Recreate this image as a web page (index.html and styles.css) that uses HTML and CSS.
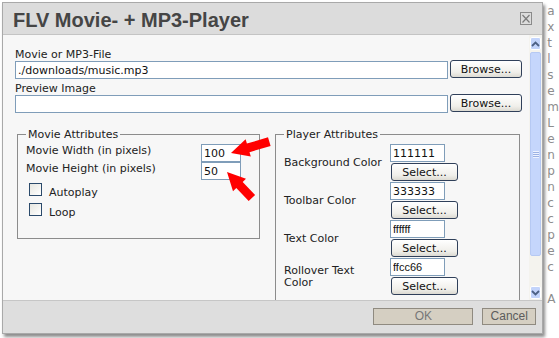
FILE: index.html
```html
<!DOCTYPE html>
<html lang="en">
<head>
    <meta charset="UTF-8">
    <title>FLV Movie- + MP3-Player</title>
    <link rel="stylesheet" href="styles.css">
</head>
<body>
    <div class="screen">
        <div class="dialog">
            <header class="titlebar">
                <h1 class="title">FLV Movie- + MP3-Player</h1>
                <span class="close-btn">
                    <svg width="12" height="13" viewBox="0 0 12 13">
                        <rect x="0.5" y="0.5" width="11" height="12" fill="none" stroke="#8a8a8a"/>
                        <path d="M2.5 3 L9.5 10.5 M9.5 3 L2.5 10.5" stroke="#7a7a7a" stroke-width="1.2"/>
                    </svg>
                </span>
            </header>
            <div class="main">
                <div class="content">
                    <label class="field-label">Movie or MP3-File</label>
                    <div class="file-row">
                        <input type="text" class="text-input file-input" value="./downloads/music.mp3">
                        <button class="btn browse">Browse...</button>
                    </div>
                    <label class="field-label">Preview Image</label>
                    <div class="file-row">
                        <input type="text" class="text-input file-input" value="">
                        <button class="btn browse">Browse...</button>
                    </div>
                    <div class="groups">
                        <fieldset class="group group-movie">
                            <legend>Movie Attributes</legend>
                            <div class="size-grid">
                                <span class="size-label">Movie Width (in pixels)</span>
                                <input type="text" class="text-input size-input" value="100">
                                <span class="size-label">Movie Height (in pixels)</span>
                                <input type="text" class="text-input size-input" value="50">
                            </div>
                            <label class="check"><input type="checkbox"><span>Autoplay</span></label>
                            <label class="check"><input type="checkbox"><span>Loop</span></label>
                        </fieldset>
                        <fieldset class="group group-player">
                            <legend>Player Attributes</legend>
                            <div class="color-row">
                                <span class="color-label">Background Color</span>
                                <div class="color-ctrl">
                                    <input type="text" class="text-input color-input" value="111111">
                                    <button class="btn select">Select...</button>
                                </div>
                            </div>
                            <div class="color-row">
                                <span class="color-label">Toolbar Color</span>
                                <div class="color-ctrl">
                                    <input type="text" class="text-input color-input" value="333333">
                                    <button class="btn select">Select...</button>
                                </div>
                            </div>
                            <div class="color-row">
                                <span class="color-label">Text Color</span>
                                <div class="color-ctrl">
                                    <input type="text" class="text-input color-input hex" value="ffffff">
                                    <button class="btn select">Select...</button>
                                </div>
                            </div>
                            <div class="color-row">
                                <span class="color-label">Rollover Text Color</span>
                                <div class="color-ctrl">
                                    <input type="text" class="text-input color-input hex" value="ffcc66">
                                    <button class="btn select">Select...</button>
                                </div>
                            </div>
                        </fieldset>
                    </div>
                </div>
                <div class="scrollbar">
                    <div class="sb-btn">
                        <svg width="9" height="6" viewBox="0 0 9 6"><path d="M1 5 L4.5 1.5 L8 5" fill="none" stroke="#4d6185" stroke-width="1.8"/></svg>
                    </div>
                    <div class="sb-thumb"><span class="grip"></span></div>
                    <div class="sb-track"></div>
                    <div class="sb-btn">
                        <svg width="9" height="6" viewBox="0 0 9 6"><path d="M1 1 L4.5 4.5 L8 1" fill="none" stroke="#4d6185" stroke-width="1.8"/></svg>
                    </div>
                </div>
            </div>
            <footer class="footer">
                <button class="dlg-btn ok">OK</button>
                <button class="dlg-btn cancel">Cancel</button>
            </footer>
        </div>
        <div class="page-peek">
            <span>a</span><span>x</span><span>t</span><span>l</span><span>s</span><span>e</span>
            <span>m</span><span>L</span><span>e</span><span>n</span><span>p</span><span>n</span>
            <span>c</span><span>c</span><span>p</span><span>e</span><span>c</span><span>&nbsp;</span>
            <span>A</span>
        </div>
        <svg class="arrows" width="559" height="338" viewBox="0 0 559 338">
            <polygon fill="#f00" points="231,153 245.6,139.3 246.9,143.6 268,137.3 270.6,145.9 249.5,152.2 250.8,156.5"/>
            <polygon fill="#f00" points="227,172 246,178.8 242.7,181.9 255.1,194.9 248.7,201.1 236.3,188.1 233,191.2"/>
        </svg>
    </div>
</body>
</html>
```

FILE: styles.css
```css
* {
    margin: 0;
    padding: 0;
    box-sizing: border-box;
}
body {
    background-color: #fff;
    font-family: "DejaVu Sans", Verdana, sans-serif;
    font-size: 11px;
    color: #222;
    overflow: hidden;
}
.screen {
    position: relative;
    display: flex;
    width: 559px;
    height: 338px;
    overflow: hidden;
}
.dialog {
    display: flex;
    flex-direction: column;
    width: 547px;
    height: 332px;
    margin: 2px 0 0 2px;
    border: 1px solid #a9a9a9;
    background-color: #f7f7f7;
    box-shadow: 2px 3px 3px rgba(0, 0, 0, 0.45);
}
.titlebar {
    display: flex;
    align-items: center;
    height: 32px;
    padding-left: 10px;
    background-color: #dcdcdc;
    border-bottom: 1px solid #c4c4c4;
}
.title {
    font-family: "Liberation Sans", Arial, sans-serif;
    font-size: 20px;
    font-weight: bold;
    line-height: 28px;
    padding-top: 2px;
    color: #454545;
}
.close-btn {
    display: flex;
    margin-left: auto;
    margin-right: 10px;
}
.main {
    display: flex;
    height: 265px;
}
.content {
    flex: 1;
    overflow: hidden;
    padding: 14px 0 0 12px;
}
.field-label {
    display: block;
    line-height: 11px;
    height: 11px;
    color: #222;
}
.file-row {
    display: flex;
    align-items: center;
    gap: 2px;
    margin: 1px 0 4px;
}
.text-input {
    height: 18px;
    border: 1px solid #7f9db9;
    background-color: #fff;
    font-family: "DejaVu Sans", Verdana, sans-serif;
    font-size: 11px;
    color: #111;
    padding: 0 2px;
    outline: none;
}
.file-input {
    width: 433px;
}
.btn {
    height: 18px;
    border: 1px solid #30405a;
    border-radius: 3px;
    background: linear-gradient(#ffffff, #f0efea 70%, #dcdad2);
    font-family: "DejaVu Sans", Verdana, sans-serif;
    font-size: 11px;
    color: #111;
    line-height: 15px;
}
.browse {
    width: 72px;
    margin-top: -2px;
}
.groups {
    display: flex;
    align-items: flex-start;
    gap: 15px;
    margin: 15px 0 0 2px;
}
.group {
    border: 1px solid #8c8c8c;
    padding: 0 8px;
    min-width: 0;
}
.group legend {
    padding: 0 2px;
    line-height: 13px;
    color: #222;
}
.group-movie {
    width: 243px;
    padding-bottom: 15px;
}
.group-player {
    width: 245px;
    height: 200px;
}
.size-grid {
    display: grid;
    grid-template-columns: 175px 40px;
    margin-top: 3px;
}
.size-label {
    line-height: 13px;
}
.size-input {
    width: 40px;
}
.check {
    display: flex;
    align-items: flex-start;
    height: 20px;
    margin-left: 3px;
}
.group-movie .size-grid + .check {
    margin-top: 3px;
}
.check input {
    appearance: none;
    width: 13px;
    height: 13px;
    border: 1px solid #2b4a6b;
    background: linear-gradient(135deg, #e6e6e0, #ffffff);
}
.check span {
    padding: 3px 0 0 7px;
    line-height: 13px;
}
.color-row {
    display: flex;
    align-items: center;
    margin-bottom: 1px;
}
.group-player legend + .color-row {
    margin-top: 3px;
}
.color-label {
    width: 106px;
    padding-right: 6px;
    line-height: 12px;
}
.color-ctrl {
    display: flex;
    flex-direction: column;
    gap: 1px;
}
.color-input {
    width: 55px;
}
.hex {
    font-family: "Liberation Sans", Arial, sans-serif;
    font-size: 11px;
}
.select {
    width: 67px;
    margin-left: 1px;
}
.scrollbar {
    display: flex;
    flex-direction: column;
    width: 13px;
    padding: 2px 1px 1px 1px;
    background-color: #f4f3ee;
}
.sb-btn {
    display: flex;
    flex: none;
    align-items: center;
    justify-content: center;
    height: 13px;
    border: 1px solid #ffffff;
    border-radius: 2px;
    background-color: #c3d4fb;
}
.sb-thumb {
    display: flex;
    flex: 0 0 204px;
    align-items: center;
    justify-content: center;
    margin-top: 2px;
    border: 1px solid #b6c9f3;
    border-radius: 2px;
    background-color: #c5d6fc;
}
.grip {
    width: 6px;
    height: 7px;
    background: repeating-linear-gradient(#eef3ff 0, #eef3ff 1px, #9cb2e4 1px, #9cb2e4 2px);
}
.sb-track {
    flex: 1;
}
.footer {
    display: flex;
    justify-content: flex-end;
    align-items: flex-start;
    gap: 9px;
    height: 33px;
    padding: 7px 6px 0 0;
    border-top: 1px solid #c6c6c6;
    background-color: #dedede;
}
.dlg-btn {
    height: 17px;
    border: 1px solid #8f8a80;
    background-color: #d5cfc2;
    font-family: "Liberation Sans", Arial, sans-serif;
    font-size: 12px;
    line-height: 15px;
    color: #777;
}
.ok {
    width: 100px;
}
.cancel {
    width: 54px;
    color: #5c5c5c;
}
.page-peek {
    display: flex;
    flex-direction: column;
    padding: 3px 0 0 4px;
    font-size: 12px;
    line-height: 16px;
    color: #8d8d8d;
}
.arrows {
    position: absolute;
    left: 0;
    top: 0;
    pointer-events: none;
}
```
